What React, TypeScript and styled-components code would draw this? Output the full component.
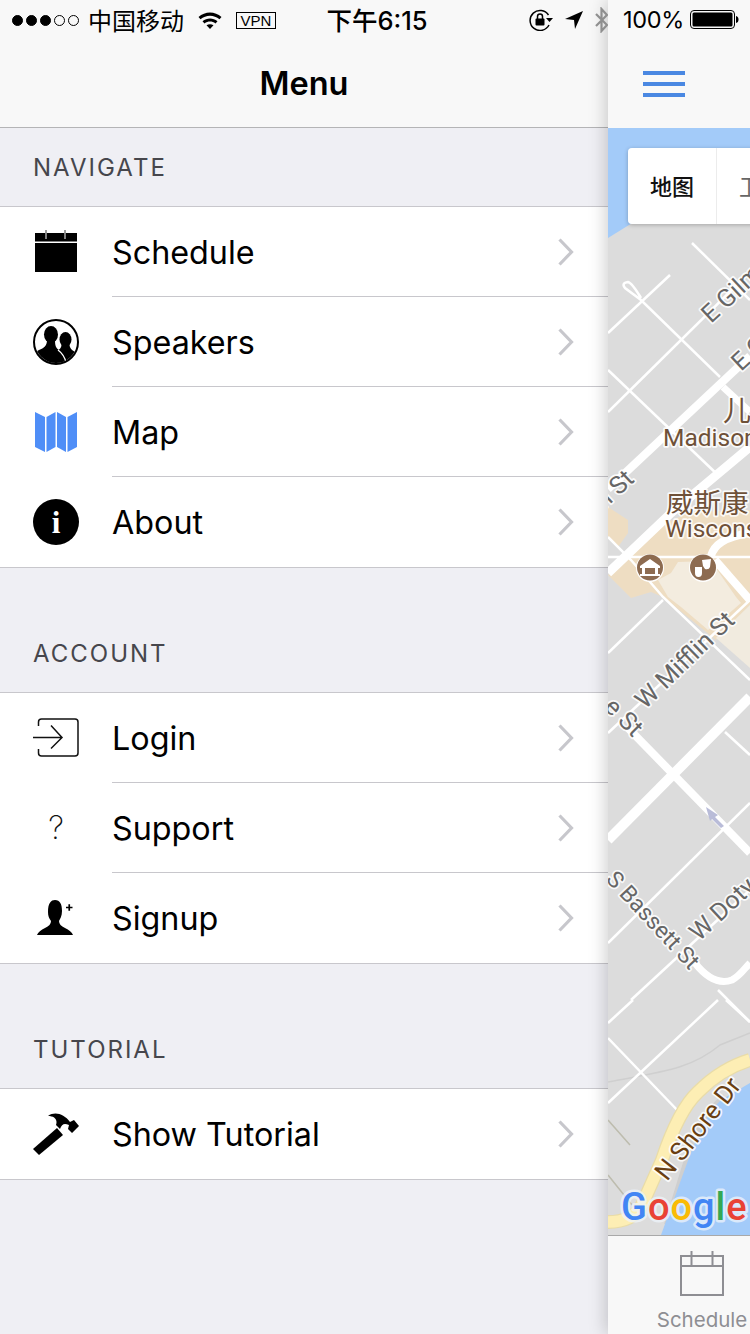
import React from "react";
import styled, { createGlobalStyle } from "styled-components";

const Global = createGlobalStyle`
  html, body { margin: 0; padding: 0; background: #efeff4; }
  * { box-sizing: border-box; }
`;

const SANS = `Inter, Roboto, "Noto Sans", "Noto Sans CJK SC", sans-serif`;

const Screen = styled.div`
  position: relative;
  display: flex;
  width: 750px;
  height: 1334px;
  overflow: hidden;
  font-family: ${SANS};
  color: #000;
`;

const StatusBar = styled.div`
  position: absolute;
  top: 0;
  left: 0;
  right: 0;
  z-index: 3;
  height: 40px;
  display: grid;
  grid-template-columns: 1fr auto 1fr;
  align-items: center;
  padding: 0 11px 0 12px;
`;
const StatusLeft = styled.div`
  display: flex;
  align-items: center;
`;
const StatusRight = styled.div`
  display: flex;
  align-items: center;
  justify-content: flex-end;
`;
const Dots = styled.div`
  display: flex;
  gap: 3px;
  margin-right: 9px;
`;
const Dot = styled.span<{ $on: boolean }>`
  width: 11px;
  height: 11px;
  border-radius: 50%;
  border: 1px solid #000;
  background: ${(p) => (p.$on ? "#000" : "transparent")};
`;
const Carrier = styled.span`
  font-family: "Noto Sans CJK SC", sans-serif;
  font-size: 24px;
  line-height: 30px;
  margin-right: 14px;
`;
const VpnBox = styled.span`
  margin-left: 14px;
  width: 40px;
  height: 17px;
  border: 1px solid #000;
  font-size: 15px;
  line-height: 15px;
  text-align: center;
  font-family: "Liberation Sans", sans-serif;
`;
const Clock = styled.span`
  margin: 2px 0 0 3px;
  font-family: Inter, "Noto Sans CJK SC", sans-serif;
  font-size: 25.5px;
  font-weight: 500;
  line-height: 30px;
`;
const Percent = styled.span`
  font-size: 23.5px;
  line-height: 30px;
  margin: 0 6px 0 15px;
  letter-spacing: -0.3px;
`;
const Glyph = styled.svg<{ $ml?: number }>`
  display: block;
  flex: none;
  margin-left: ${(p) => p.$ml ?? 0}px;
`;

const Drawer = styled.div`
  width: 608px;
  height: 100%;
  flex: none;
  background: #efeff4;
`;
const NavBar = styled.div`
  height: 128px;
  padding-top: 40px;
  display: flex;
  align-items: center;
  justify-content: center;
  background: #f8f8f8;
  border-bottom: 1px solid #b4b4b6;
`;
const NavTitle = styled.h1`
  margin: 0;
  font-size: 32.5px;
  font-weight: 600;
  line-height: 40px;
`;
const Section = styled.section`
  & + & {
    margin-top: 46px;
  }
`;
const SectionLabel = styled.div`
  height: 78px;
  display: flex;
  align-items: center;
  padding-left: 33px;
  font-size: 24px;
  letter-spacing: 2px;
  color: #46464c;
`;
const List = styled.div`
  background: #fff;
  border-top: 1px solid #c8c7cc;
  border-bottom: 1px solid #c8c7cc;
`;
const Row = styled.div`
  display: flex;
  align-items: stretch;
  height: 90px;
`;
const IconCell = styled.div`
  width: 112px;
  flex: none;
  display: flex;
  align-items: center;
  justify-content: center;
`;
const RowBody = styled.div`
  flex: 1;
  display: flex;
  align-items: center;
  justify-content: space-between;
  padding-right: 34px;
  border-bottom: 1px solid #c8c7cc;
  ${Row}:last-child & {
    border-bottom: none;
  }
`;
const RowLabel = styled.span`
  font-size: 32.3px;
  line-height: 40px;
  margin-top: 2px;
`;
const Question = styled.span`
  font-family: Inter, sans-serif;
  font-size: 32px;
  font-weight: 200;
  line-height: 40px;
  color: #111;
`;

const Content = styled.div`
  position: relative;
  z-index: 2;
  width: 142px;
  flex: none;
  display: flex;
  flex-direction: column;
  height: 100%;
  box-shadow: -3px 0 16px rgba(0, 0, 0, 0.18);
`;
const TopBar = styled.div`
  height: 128px;
  flex: none;
  padding: 71px 0 0 35px;
  background: #f8f8f8;
`;
const BurgerBar = styled.div`
  width: 42px;
  height: 3.5px;
  background: #4a88e2;
  margin-bottom: 7.5px;
`;
const MapArea = styled.div`
  position: relative;
  flex: 1;
  overflow: hidden;
  background: #dcdcdc;
`;
const MapSvg = styled.svg`
  display: block;
`;
const MapControl = styled.div`
  position: absolute;
  top: 20px;
  left: 20px;
  display: flex;
  height: 76px;
  border-radius: 4px 0 0 4px;
  box-shadow: 0 1px 4px rgba(0, 0, 0, 0.25);
`;
const MapButton = styled.div<{ $first?: boolean }>`
  width: ${(p) => (p.$first ? "88px" : "60px")};
  flex: none;
  display: flex;
  align-items: center;
  background: #fff;
  padding: 0 0 3px 22px;
  white-space: nowrap;
  overflow: hidden;
  border-radius: ${(p) => (p.$first ? "4px 0 0 4px" : 0)};
  border-left: ${(p) => (p.$first ? "none" : "1px solid #ececec")};
  font-family: "Noto Sans CJK SC", sans-serif;
  font-size: 22px;
  font-weight: ${(p) => (p.$first ? 500 : 400)};
  color: ${(p) => (p.$first ? "#111" : "#666")};
`;
const TabBar = styled.div`
  height: 99px;
  flex: none;
  background: #f8f8f8;
  border-top: 1px solid #a9a9a9;
  display: flex;
  flex-direction: column;
  align-items: center;
  padding: 15px 0 0 46px;
  color: #8e8e93;
  white-space: nowrap;
`;
const TabLabel = styled.span`
  font-size: 20.5px;
  line-height: 26px;
  margin-top: 10px;
`;

const Chevron = () => (
  <Glyph width="16" height="28" viewBox="0 0 16 28">
    <path d="M1.500 1.500 L13.500 14 L1.500 26.500" fill="none" stroke="#c7c7cc" strokeWidth="3.200" />
  </Glyph>
);

const CalendarSolid = () => (
  <Glyph width="44" height="44" viewBox="0 0 44 44">
    <rect x="1" y="3" width="42" height="8.5" fill="#000" />
    <rect x="1" y="13" width="42" height="29" fill="#000" />
    <path d="M12 0 V9 M31 0 V9" stroke="#fff" strokeWidth="1" />
    <path d="M12 0 V3 M31 0 V3" stroke="#333" strokeWidth="1" />
  </Glyph>
);

const Speakers = () => (
  <Glyph width="46" height="46" viewBox="0 0 46 46">
    <defs>
      <clipPath id="spk">
        <circle cx="23" cy="23" r="21" />
      </clipPath>
    </defs>
    <circle cx="23" cy="23" r="22" fill="#fff" stroke="#000" strokeWidth="2" />
    <g clipPath="url(#spk)">
      <ellipse cx="32.500" cy="20.500" rx="6" ry="7.500" fill="#000" />
      <path d="M28.500 26 C28.500 29 26 31 24 32 L33 46 H46 V35 C42 33 37 31 36.500 26 Z" fill="#000" />
      <ellipse cx="18" cy="15.500" rx="7" ry="8.500" fill="#000" />
      <path d="M14 21 C14 27 11 29 6 31 C2 33 0 35 0 40 L4 46 H35 C35 38 31 33 26 31 C23 29 22 27 22 21 Z" fill="#000" />
      <path d="M25 31 C29 34 32.500 38 33.500 46" stroke="#fff" strokeWidth="1.300" fill="none" />
    </g>
  </Glyph>
);

const MapFold = () => (
  <Glyph width="44" height="42" viewBox="0 0 44 42">
    <g fill="#4f8ef7">
      <path d="M1 1 L11 6 V41 L1 36 Z" />
      <path d="M12.500 6 L21.500 1 V36 L12.500 41 Z" />
      <path d="M23 1 L32 6 V41 L23 36 Z" />
      <path d="M33.500 6 L43 1 V36 L33.500 41 Z" />
    </g>
  </Glyph>
);

const Info = () => (
  <Glyph width="46" height="46" viewBox="0 0 46 46">
    <circle cx="23" cy="23" r="23" fill="#000" />
    <text x="23" y="33.500" textAnchor="middle" fontFamily="'Liberation Serif', serif" fontWeight="700" fontSize="31" fill="#fff">
      i
    </text>
  </Glyph>
);

const LoginIcon = () => (
  <Glyph width="46" height="40" viewBox="0 0 46 40">
    <path d="M5.500 8 V4 Q5.500 1 8.500 1 H42 Q45 1 45 4 V35 Q45 38 42 38 H8.500 Q5.500 38 5.500 35 V31" fill="none" stroke="#111" strokeWidth="1.500" />
    <path d="M0 19.500 H28.500 M18 7.500 L29 19.500 L18 30.500" fill="none" stroke="#111" strokeWidth="1.500" />
  </Glyph>
);

const SignupIcon = () => (
  <Glyph width="40" height="36" viewBox="0 0 40 36">
    <path d="M12 12 C12 3 15 0 19 0 C24 0 26 4 26 11 C26 16 24 19 23 21 C23 24 25 26 29 28 C33 30 36 32 37 35 H1 C2 32 5 30 9 28 C13 26 15 24 15 21 C13 18 12 16 12 12 Z" fill="#000" />
    <path d="M30 7.500 H36.500 M33.250 4.250 V10.750" stroke="#000" strokeWidth="1.700" />
  </Glyph>
);

const Hammer = () => (
  <Glyph width="46" height="44" viewBox="0 0 46 44">
    <path d="M0 37 L24 16 L30 23 L6 43 Z" fill="#000" />
    <path d="M15 4 C22 -1 31 2 37 10 L41 8 L46 14 L39 21 L35 17 L36 13 C31 11 29 12 27 17 L23 13 C25 7 21 4 15 4 Z" fill="#000" />
  </Glyph>
);

type Item = { label: string; icon: React.ReactNode };
const sections: { title: string; items: Item[] }[] = [
  {
    title: "NAVIGATE",
    items: [
      { label: "Schedule", icon: <CalendarSolid /> },
      { label: "Speakers", icon: <Speakers /> },
      { label: "Map", icon: <MapFold /> },
      { label: "About", icon: <Info /> },
    ],
  },
  {
    title: "ACCOUNT",
    items: [
      { label: "Login", icon: <LoginIcon /> },
      { label: "Support", icon: <Question>?</Question> },
      { label: "Signup", icon: <SignupIcon /> },
    ],
  },
  { title: "TUTORIAL", items: [{ label: "Show Tutorial", icon: <Hammer /> }] },
];

const roads: [string, number][] = [
  ["M608 333 L670 275", 2.5],
  ["M608 412 L750 272", 2.5],
  ["M608 489 L750 356", 8],
  ["M608 573 L671 513 L750 447", 9],
  ["M608 653 L663 600", 2.5],
  ["M608 733 L750 600", 2.5],
  ["M608 840 L750 697", 10],
  ["M608 943 L750 803", 2.5],
  ["M631 1000 L750 890", 2.5],
  ["M608 1023 L633 1000", 2.5],
  ["M608 1103 L718 1000", 2.5],
  ["M692 243 L750 300", 2.5],
  ["M720 377 L641 300 L625 288 Q621 283 628 282 Q632 283 641 298", 2.5],
  ["M608 370 L720 477", 2.5],
  ["M723 387 L750 412", 7],
  ["M608 537 L631 560 L663 597 L750 680", 2.5],
  ["M628 728 L750 853", 8],
  ["M725 732 L750 755", 2.5],
  ["M695 963 C706 977 718 985 732 980 C740 976 745 968 750 963", 7],
  ["M718 990 L750 1022", 2.5],
  ["M608 1038 L680 1113", 2.5],
  ["M726 1000 L750 1022", 2.5],
];

const MapDrawing = () => (
  <MapSvg width="142" height="1107" viewBox="608 128 142 1107">
    <rect x="608" y="128" width="142" height="1107" fill="#dcdcdc" />
    <path d="M608 128 H750 V150 L608 238 Z" fill="#a3cbf9" />
    <path d="M608 507 L628 520 V533 L618 547 L608 537 Z" fill="#eeddc2" />
    <path d="M666 523 L690 512 L750 510 V605 L716 640 L663 597 L651 592 L631 598 L608 575 L640 545 Z" fill="#eeddc2" />
    <path d="M658 580 L671 573 L678 562 L711 561 L736 597 L741 603 L718 623 L708 630 L681 607 L668 597 Z" fill="#f3ecdf" />
    <path d="M750 605 L716 638 L750 668 Z" fill="#f1ebdf" />
    <path d="M608 557 H750" stroke="#fff" strokeWidth="2.500" fill="none" />
    <path d="M711 556 C714 545 724 537 750 533" stroke="#fff" strokeWidth="8" fill="none" />
    <path d="M715 560 L750 600" stroke="#fff" strokeWidth="8" fill="none" />
    <path d="M608 1082 C660 1072 690 1070 720 1045 L750 1033" stroke="#cfcfcf" strokeWidth="1.500" fill="none" />
    <path d="M608 1120 L630 1145 M608 1175 L632 1205" stroke="#bdbcae" strokeWidth="1.500" fill="none" />
    {roads.map(([d, w]) => (
      <path key={d} d={d} stroke="#fff" strokeWidth={w} fill="none" />
    ))}
    <path d="M667 1225 L690 1150 C698 1125 710 1108 725 1097" stroke="#cfcfcf" strokeWidth="6" fill="none" />
    <path d="M750 1083 L721 1100 C708 1112 700 1130 690 1155 L661 1235 H750 Z" fill="#a3cbf9" />
    <path d="M608 1222 C625 1222 636 1216 642 1205 L662 1160 C672 1130 684 1105 698 1092 C712 1078 730 1066 750 1060" stroke="#e9dca8" strokeWidth="14" fill="none" />
    <path d="M608 1222 C625 1222 636 1216 642 1205 L662 1160 C672 1130 684 1105 698 1092 C712 1078 730 1066 750 1060" stroke="#fdeeb4" strokeWidth="11.500" fill="none" />
    <g fontFamily="Roboto, 'Noto Sans CJK SC', sans-serif" stroke="#fff" strokeWidth="3.500" strokeOpacity="0.85" paintOrder="stroke" strokeLinejoin="round">
      <g fill="#666" fontSize="25">
        <text transform="translate(711 324) rotate(-43)">E Gilm</text>
        <text transform="translate(741 372) rotate(-43)">E G</text>
        <text transform="translate(604 510) rotate(-43)">n St</text>
        <text transform="translate(645 710) rotate(-44)">W Mifflin St</text>
        <text transform="translate(603 708) rotate(45)">e St</text>
        <text transform="translate(605 880) rotate(47)" fontSize="23">S Bassett St</text>
        <text transform="translate(699 942) rotate(-43)">W Doty</text>
      </g>
      <g fill="#6f5138">
        <text x="723" y="421" fontSize="28">儿</text>
        <text x="663" y="446" fontSize="24.500">Madison</text>
        <text x="666" y="513" fontSize="27.500">威斯康</text>
        <text x="665" y="537" fontSize="24.500">Wisconsin</text>
      </g>
      <text transform="translate(667 1182) rotate(-52)" fontSize="25.500" fill="#6a3f12">N Shore Dr</text>
    </g>
    <circle cx="650" cy="568" r="14" fill="#fff" />
    <circle cx="650" cy="567.500" r="13" fill="#8d6b50" />
    <path d="M640 566 L650 559 L660 566 V568 H658 V574 H660 V576 H640 V574 H642 V568 H640 Z M645 568 V574 H655 V568 Z" fill="#fff" />
    <circle cx="703" cy="568" r="14" fill="#fff" />
    <circle cx="703" cy="567.500" r="13" fill="#8d6b50" />
    <path d="M695 567 L702 567 L702 573 Q702 577 698.500 577 Q695 577 695 573 Z M702 560 L711 559 L710 567 Q709 570 705 569 L703 566 Z" fill="#fff" />
    <path d="M724 826 L715 817 L718 815 L706 807 L710 821 L712 819 L721 828 Z" fill="#b9bcd8" />
    <text x="621" y="1220" fontFamily="Roboto, sans-serif" fontWeight="500" fontSize="38" letterSpacing="1" stroke="#eef4fb" strokeOpacity="0.75" strokeWidth="5" paintOrder="stroke" strokeLinejoin="round">
      <tspan fill="#4285f4">G</tspan>
      <tspan fill="#e94235">o</tspan>
      <tspan fill="#fabb05">o</tspan>
      <tspan fill="#4285f4">g</tspan>
      <tspan fill="#34a853">l</tspan>
      <tspan fill="#e94235">e</tspan>
    </text>
  </MapSvg>
);

export default function App() {
  return (
    <Screen>
      <Global />
      <StatusBar>
        <StatusLeft>
          <Dots>
            {[1, 1, 1, 0, 0].map((on, i) => (
              <Dot key={i} $on={!!on} />
            ))}
          </Dots>
          <Carrier>中国移动</Carrier>
          <Glyph width="24" height="18" viewBox="0 0 24 18">
            <path d="M0.500 6 C7 0 17 0 23.500 6 L21.500 8.200 C16 3.500 8 3.500 2.500 8.200 Z M4.500 10.200 C9 6.500 15 6.500 19.500 10.200 L17.500 12.400 C14 9.800 10 9.800 6.500 12.400 Z M8.500 14.200 C10.500 12.800 13.500 12.800 15.500 14.200 L12 18 Z" fill="#000" />
          </Glyph>
          <VpnBox>VPN</VpnBox>
        </StatusLeft>
        <Clock>下午6:15</Clock>
        <StatusRight>
          <Glyph width="24" height="22" viewBox="0 0 24 22">
            <path d="M19.500 6 A10 10 0 1 0 20 16" fill="none" stroke="#000" strokeWidth="1.500" />
            <path d="M17 9 L24 9 L20.500 13 Z" fill="#000" />
            <rect x="6.500" y="9.500" width="9" height="7" rx="1" fill="#000" />
            <path d="M8.500 10 V7.500 A2.500 2.500 0 0 1 13.500 7.500 V10" fill="none" stroke="#000" strokeWidth="1.500" />
          </Glyph>
          <Glyph width="18" height="18" viewBox="0 0 18 18" $ml={12}>
            <path d="M0 8 L18 0 L10 18 L9 9 Z" fill="#000" />
          </Glyph>
          <Glyph width="13" height="26" viewBox="0 0 13 26" $ml={12}>
            <path d="M1 7 L12 18 L6.500 24 V2 L12 8 L1 19" fill="none" stroke="#8f8f8f" strokeWidth="2.200" />
          </Glyph>
          <Percent>100%</Percent>
          <Glyph width="49" height="20" viewBox="0 0 49 20">
            <rect x="0.500" y="0.500" width="44" height="18" rx="3.500" fill="none" stroke="#000" />
            <rect x="2.500" y="2.500" width="40" height="14" rx="1.500" fill="#000" />
            <path d="M46 6 Q48.500 6.500 48.500 9.500 Q48.500 12.500 46 13 Z" fill="#000" />
          </Glyph>
        </StatusRight>
      </StatusBar>

      <Drawer>
        <NavBar>
          <NavTitle>Menu</NavTitle>
        </NavBar>
        {sections.map((s) => (
          <Section key={s.title}>
            <SectionLabel>{s.title}</SectionLabel>
            <List>
              {s.items.map((it) => (
                <Row key={it.label}>
                  <IconCell>{it.icon}</IconCell>
                  <RowBody>
                    <RowLabel>{it.label}</RowLabel>
                    <Chevron />
                  </RowBody>
                </Row>
              ))}
            </List>
          </Section>
        ))}
      </Drawer>

      <Content>
        <TopBar>
          <BurgerBar />
          <BurgerBar />
          <BurgerBar />
        </TopBar>
        <MapArea>
          <MapDrawing />
          <MapControl>
            <MapButton $first>地图</MapButton>
            <MapButton>卫星</MapButton>
          </MapControl>
        </MapArea>
        <TabBar>
          <Glyph width="46" height="46" viewBox="0 0 46 46">
            <path d="M2 5 H44 V44 H2 Z M2 15 H44 M12.500 0 V15 M33.500 0 V15" fill="none" stroke="#8e8e93" strokeWidth="2" />
          </Glyph>
          <TabLabel>Schedule</TabLabel>
        </TabBar>
      </Content>
    </Screen>
  );
}
